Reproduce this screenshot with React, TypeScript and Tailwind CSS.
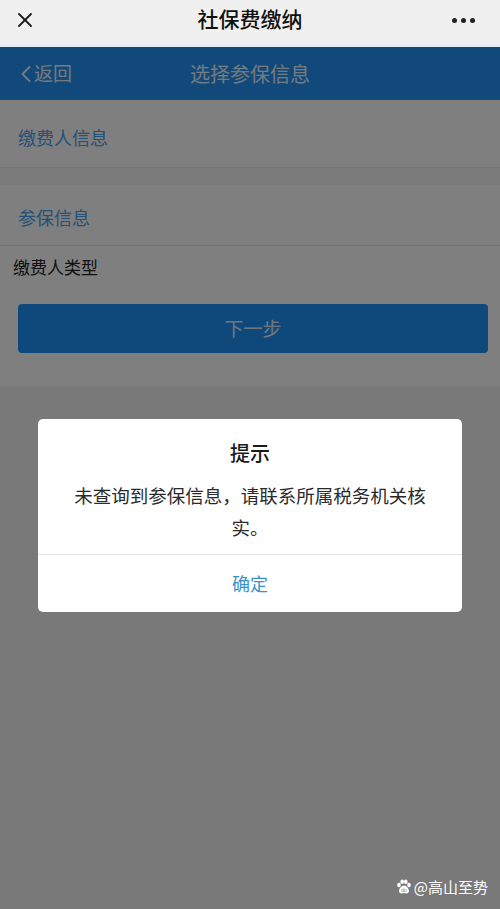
import { X, ChevronLeft } from "lucide-react";

const font = { fontFamily: '"Noto Sans CJK SC", "Noto Sans", sans-serif' };

function Paw() {
  return (
    <svg width="16" height="16" viewBox="0 0 16 16" className="shrink-0">
      <ellipse cx="3" cy="6" rx="1.8" ry="2.2" fill="white" />
      <ellipse cx="6.2" cy="2.8" rx="1.8" ry="2.2" fill="white" />
      <ellipse cx="9.8" cy="2.8" rx="1.8" ry="2.2" fill="white" />
      <ellipse cx="13" cy="6" rx="1.8" ry="2.2" fill="white" />
      <path d="M8 6.5c-2.6 0-5 3.4-5 5.6 0 1.8 1.6 2.6 3 2.4 1-.1 1.4-.4 2-.4s1 .3 2 .4c1.4.2 3-.6 3-2.4 0-2.2-2.4-5.6-5-5.6z" fill="white" />
      <text x="8" y="13.2" textAnchor="middle" fontSize="4.5" fill="#777" style={font}>du</text>
    </svg>
  );
}

export default function App() {
  return (
    <div className="w-[500px] h-[909px] flex flex-col overflow-hidden bg-[#f3f3f3]" style={font}>
      {/* WeChat top bar */}
      <header className="h-[47px] shrink-0 bg-[#f0f0f0] border-b-[3px] border-[#e6eef5] flex items-center px-[13px] relative">
        <X size={24} strokeWidth={1.8} className="text-[#1a1a1a] -mt-[4px]" />
        <div className="absolute inset-x-0 top-0 h-[38px] flex items-center justify-center text-[21px] font-medium text-[#111] pointer-events-none">
          社保费缴纳
        </div>
        <div className="flex-1" />
        <div className="flex items-center gap-[4px] pr-[12px] -mt-[4px]">
          <span className="w-[5px] h-[5px] rounded-full bg-[#222]" />
          <span className="w-[5px] h-[5px] rounded-full bg-[#222]" />
          <span className="w-[5px] h-[5px] rounded-full bg-[#222]" />
        </div>
      </header>

      {/* page under the mask */}
      <div className="flex-1 relative flex flex-col">
        <div className="h-[53px] shrink-0 bg-[#2192f4] flex items-center relative">
          <div className="flex items-center pl-[12px] text-white/90 text-[19px]">
            <ChevronLeft size={28} strokeWidth={1.6} className="-mr-[6px]" />
            <span>返回</span>
          </div>
          <div className="absolute inset-0 flex items-center justify-center text-white/90 text-[20px]">
            选择参保信息
          </div>
        </div>

        <div className="bg-white">
          <div className="h-[68px] flex items-center px-[18px] pt-[8px] text-[18px] text-[#4aa2f0] border-b border-[#ececec]">
            缴费人信息
          </div>
        </div>
        <div className="h-[17px] bg-[#f4f4f4]" />
        <div className="bg-white pb-[33px]">
          <div className="h-[61px] flex items-center px-[18px] pt-[4px] text-[18px] text-[#4aa2f0] border-b border-[#ececec]">
            参保信息
          </div>
          <div className="h-[42px] flex items-center px-[13px] text-[17px] text-[#222]">缴费人类型</div>
          <div className="pl-[18px] pr-[12px] pt-[16px]">
            <button className="w-full h-[49px] rounded-[4px] bg-[#1f92f8] text-white/85 text-[19px]">下一步</button>
          </div>
        </div>
        <div className="flex-1 bg-[#f2f2f2]" />

        {/* mask + dialog */}
        <div className="absolute inset-0 bg-black/50 flex justify-center items-start pt-[372px]">
          <div className="w-[424px] bg-white rounded-[5px] overflow-hidden">
            <div className="pt-[19px] pb-[11px] px-[30px] text-center">
              <div className="text-[20px] font-medium text-[#1a1a1a] leading-[30px]">提示</div>
              <div className="mt-[11px] text-[18.5px] text-[#2a2a2a] leading-[32px]">
                未查询到参保信息，请联系所属税务机关核实。
              </div>
            </div>
            <div className="border-t border-[#e3e3e3] h-[58px] flex items-center justify-center text-[18px] text-[#3a90c8]">
              确定
            </div>
          </div>
        </div>

        {/* watermark */}
        <div className="absolute right-[12px] bottom-[11px] flex items-center gap-[2px] text-white text-[15px]">
          <Paw />
          <span>@高山至势</span>
        </div>
      </div>
    </div>
  );
}
